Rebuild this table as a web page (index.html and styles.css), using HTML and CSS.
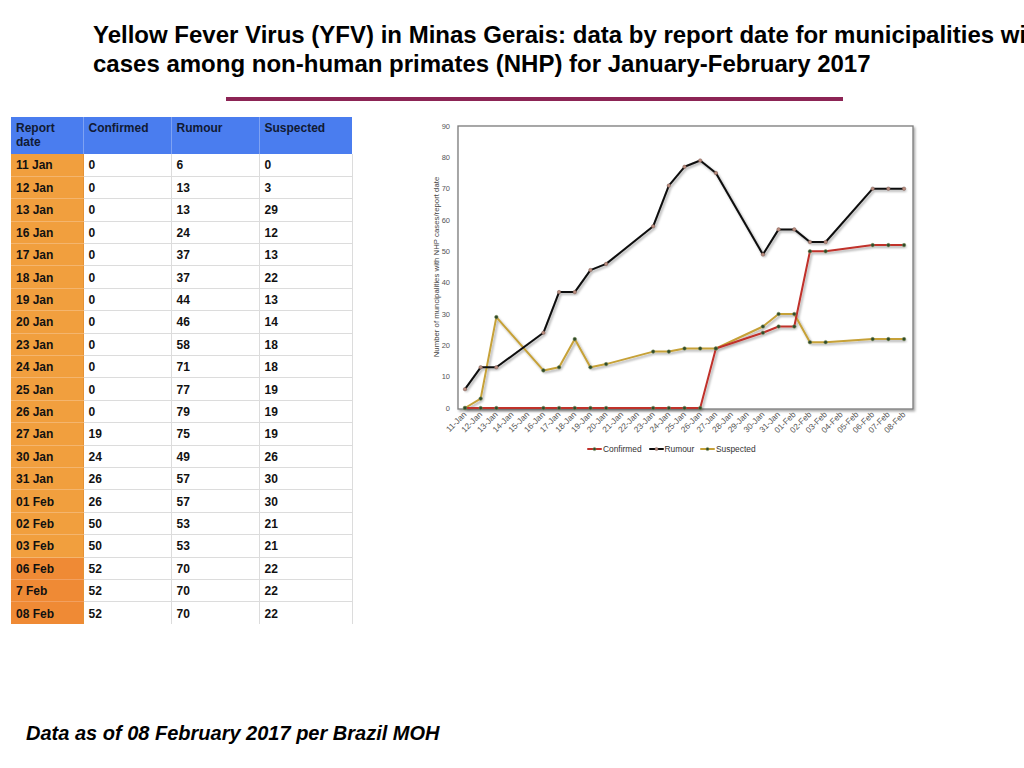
FILE: index.html
```html
<!DOCTYPE html>
<html>
<head>
<meta charset="utf-8">
<title>Yellow Fever Virus in Minas Gerais</title>
<link rel="stylesheet" href="styles.css">
</head>
<body>
<div class="slide">
  <h1 class="title">Yellow Fever Virus (YFV) in Minas Gerais: data by report date for municipalities with<br>cases among non-human primates (NHP) for January-February 2017</h1>
  <div class="rule"></div>
  <div class="content">
    <table class="data">
      <colgroup><col class="c1"><col class="c2"><col class="c3"><col class="c4"></colgroup>
      <thead>
        <tr><th>Report date</th><th>Confirmed</th><th>Rumour</th><th>Suspected</th></tr>
      </thead>
      <tbody>
        <tr><th>11 Jan</th><td>0</td><td>6</td><td>0</td></tr>
        <tr><th>12 Jan</th><td>0</td><td>13</td><td>3</td></tr>
        <tr><th>13 Jan</th><td>0</td><td>13</td><td>29</td></tr>
        <tr><th>16 Jan</th><td>0</td><td>24</td><td>12</td></tr>
        <tr><th>17 Jan</th><td>0</td><td>37</td><td>13</td></tr>
        <tr><th>18 Jan</th><td>0</td><td>37</td><td>22</td></tr>
        <tr><th>19 Jan</th><td>0</td><td>44</td><td>13</td></tr>
        <tr><th>20 Jan</th><td>0</td><td>46</td><td>14</td></tr>
        <tr><th>23 Jan</th><td>0</td><td>58</td><td>18</td></tr>
        <tr><th>24 Jan</th><td>0</td><td>71</td><td>18</td></tr>
        <tr><th>25 Jan</th><td>0</td><td>77</td><td>19</td></tr>
        <tr><th>26 Jan</th><td>0</td><td>79</td><td>19</td></tr>
        <tr><th>27 Jan</th><td>19</td><td>75</td><td>19</td></tr>
        <tr><th>30 Jan</th><td>24</td><td>49</td><td>26</td></tr>
        <tr><th>31 Jan</th><td>26</td><td>57</td><td>30</td></tr>
        <tr><th>01 Feb</th><td>26</td><td>57</td><td>30</td></tr>
        <tr><th>02 Feb</th><td>50</td><td>53</td><td>21</td></tr>
        <tr><th>03 Feb</th><td>50</td><td>53</td><td>21</td></tr>
        <tr class="late"><th>06 Feb</th><td>52</td><td>70</td><td>22</td></tr>
        <tr class="late"><th>7 Feb</th><td>52</td><td>70</td><td>22</td></tr>
        <tr class="late"><th>08 Feb</th><td>52</td><td>70</td><td>22</td></tr>
      </tbody>
    </table>

    <svg class="chart" width="500" height="350" viewBox="0 0 500 350">
      <defs>
        <filter id="sh" x="-10%" y="-10%" width="120%" height="130%">
          <feDropShadow dx="1.5" dy="1.8" stdDeviation="1" flood-color="#000" flood-opacity="0.35"/>
        </filter>
      </defs>
      <rect class="plot" x="37" y="11" width="455" height="283" filter="url(#sh)"/>
      <g class="ylab">
        <text x="29" y="13.7">90</text>
        <text x="29" y="45">80</text>
        <text x="29" y="76.3">70</text>
        <text x="29" y="107.7">60</text>
        <text x="29" y="139">50</text>
        <text x="29" y="170.3">40</text>
        <text x="29" y="201.7">30</text>
        <text x="29" y="233">20</text>
        <text x="29" y="264.3">10</text>
        <text x="29" y="295.7">0</text>
      </g>
      <text class="ytitle" transform="translate(17.5,152) rotate(-90)">Number of  muncipalities with NHP cases/report date</text>
      <g class="xlab">
        <text transform="translate(46,300) rotate(-45)">11-Jan</text>
        <text transform="translate(61.68,300) rotate(-45)">12-Jan</text>
        <text transform="translate(77.36,300) rotate(-45)">13-Jan</text>
        <text transform="translate(93.04,300) rotate(-45)">14-Jan</text>
        <text transform="translate(108.72,300) rotate(-45)">15-Jan</text>
        <text transform="translate(124.4,300) rotate(-45)">16-Jan</text>
        <text transform="translate(140.08,300) rotate(-45)">17-Jan</text>
        <text transform="translate(155.76,300) rotate(-45)">18-Jan</text>
        <text transform="translate(171.44,300) rotate(-45)">19-Jan</text>
        <text transform="translate(187.12,300) rotate(-45)">20-Jan</text>
        <text transform="translate(202.8,300) rotate(-45)">21-Jan</text>
        <text transform="translate(218.48,300) rotate(-45)">22-Jan</text>
        <text transform="translate(234.16,300) rotate(-45)">23-Jan</text>
        <text transform="translate(249.84,300) rotate(-45)">24-Jan</text>
        <text transform="translate(265.52,300) rotate(-45)">25-Jan</text>
        <text transform="translate(281.2,300) rotate(-45)">26-Jan</text>
        <text transform="translate(296.88,300) rotate(-45)">27-Jan</text>
        <text transform="translate(312.56,300) rotate(-45)">28-Jan</text>
        <text transform="translate(328.24,300) rotate(-45)">29-Jan</text>
        <text transform="translate(343.92,300) rotate(-45)">30-Jan</text>
        <text transform="translate(359.6,300) rotate(-45)">31-Jan</text>
        <text transform="translate(375.28,300) rotate(-45)">01-Feb</text>
        <text transform="translate(390.96,300) rotate(-45)">02-Feb</text>
        <text transform="translate(406.64,300) rotate(-45)">03-Feb</text>
        <text transform="translate(422.32,300) rotate(-45)">04-Feb</text>
        <text transform="translate(438,300) rotate(-45)">05-Feb</text>
        <text transform="translate(453.68,300) rotate(-45)">06-Feb</text>
        <text transform="translate(469.36,300) rotate(-45)">07-Feb</text>
        <text transform="translate(485.04,300) rotate(-45)">08-Feb</text>
      </g>

      <g filter="url(#sh)">
        <polyline class="s-sus" points="44,293 59.68,283.6 75.36,202.1 122.4,255.4 138.08,252.3 153.76,224.1 169.44,252.3 185.12,249.1 232.16,236.6 247.84,236.6 263.52,233.5 279.2,233.5 294.88,233.5 341.92,211.5 357.6,199 373.28,199 388.96,227.2 404.64,227.2 451.68,224.1 467.36,224.1 483.04,224.1"/>
        <polyline class="s-rum" points="44,274.2 59.68,252.3 75.36,252.3 122.4,217.8 138.08,177.1 153.76,177.1 169.44,155.1 185.12,148.9 232.16,111.3 247.84,70.6 263.52,51.8 279.2,45.5 294.88,58 341.92,139.5 357.6,114.4 373.28,114.4 388.96,127 404.64,127 451.68,73.7 467.36,73.7 483.04,73.7"/>
        <polyline class="s-con" points="44,293 59.68,293 75.36,293 122.4,293 138.08,293 153.76,293 169.44,293 185.12,293 232.16,293 247.84,293 263.52,293 279.2,293 294.88,233.5 341.92,217.8 357.6,211.5 373.28,211.5 388.96,136.3 404.64,136.3 451.68,130.1 467.36,130.1 483.04,130.1"/>
      </g>

      <g class="m-sus">
        <circle cx="44" cy="293" r="1.8"/><circle cx="59.68" cy="283.6" r="1.8"/><circle cx="75.36" cy="202.1" r="1.8"/><circle cx="122.4" cy="255.4" r="1.8"/><circle cx="138.08" cy="252.3" r="1.8"/><circle cx="153.76" cy="224.1" r="1.8"/><circle cx="169.44" cy="252.3" r="1.8"/><circle cx="185.12" cy="249.1" r="1.8"/><circle cx="232.16" cy="236.6" r="1.8"/><circle cx="247.84" cy="236.6" r="1.8"/><circle cx="263.52" cy="233.5" r="1.8"/><circle cx="279.2" cy="233.5" r="1.8"/><circle cx="294.88" cy="233.5" r="1.8"/><circle cx="341.92" cy="211.5" r="1.8"/><circle cx="357.6" cy="199" r="1.8"/><circle cx="373.28" cy="199" r="1.8"/><circle cx="388.96" cy="227.2" r="1.8"/><circle cx="404.64" cy="227.2" r="1.8"/><circle cx="451.68" cy="224.1" r="1.8"/><circle cx="467.36" cy="224.1" r="1.8"/><circle cx="483.04" cy="224.1" r="1.8"/>
      </g>
      <g class="m-rum">
        <circle cx="44" cy="274.2" r="1.8"/><circle cx="59.68" cy="252.3" r="1.8"/><circle cx="75.36" cy="252.3" r="1.8"/><circle cx="122.4" cy="217.8" r="1.8"/><circle cx="138.08" cy="177.1" r="1.8"/><circle cx="153.76" cy="177.1" r="1.8"/><circle cx="169.44" cy="155.1" r="1.8"/><circle cx="185.12" cy="148.9" r="1.8"/><circle cx="232.16" cy="111.3" r="1.8"/><circle cx="247.84" cy="70.6" r="1.8"/><circle cx="263.52" cy="51.8" r="1.8"/><circle cx="279.2" cy="45.5" r="1.8"/><circle cx="294.88" cy="58" r="1.8"/><circle cx="341.92" cy="139.5" r="1.8"/><circle cx="357.6" cy="114.4" r="1.8"/><circle cx="373.28" cy="114.4" r="1.8"/><circle cx="388.96" cy="127" r="1.8"/><circle cx="404.64" cy="127" r="1.8"/><circle cx="451.68" cy="73.7" r="1.8"/><circle cx="467.36" cy="73.7" r="1.8"/><circle cx="483.04" cy="73.7" r="1.8"/>
      </g>
      <g class="m-con">
        <circle cx="44" cy="293" r="1.8"/><circle cx="59.68" cy="293" r="1.8"/><circle cx="75.36" cy="293" r="1.8"/><circle cx="122.4" cy="293" r="1.8"/><circle cx="138.08" cy="293" r="1.8"/><circle cx="153.76" cy="293" r="1.8"/><circle cx="169.44" cy="293" r="1.8"/><circle cx="185.12" cy="293" r="1.8"/><circle cx="232.16" cy="293" r="1.8"/><circle cx="247.84" cy="293" r="1.8"/><circle cx="263.52" cy="293" r="1.8"/><circle cx="279.2" cy="293" r="1.8"/><circle cx="294.88" cy="233.5" r="1.8"/><circle cx="341.92" cy="217.8" r="1.8"/><circle cx="357.6" cy="211.5" r="1.8"/><circle cx="373.28" cy="211.5" r="1.8"/><circle cx="388.96" cy="136.3" r="1.8"/><circle cx="404.64" cy="136.3" r="1.8"/><circle cx="451.68" cy="130.1" r="1.8"/><circle cx="467.36" cy="130.1" r="1.8"/><circle cx="483.04" cy="130.1" r="1.8"/>
      </g>

      <g class="legend">
        <line class="s-con" x1="167" y1="334" x2="180" y2="334"/>
        <circle class="lm-dark" cx="173.5" cy="334" r="1.6"/>
        <text x="182" y="337">Confirmed</text>
        <line class="s-rum" x1="229" y1="334" x2="242" y2="334"/>
        <circle class="lm-rum" cx="235.5" cy="334" r="1.6"/>
        <text x="243.5" y="337">Rumour</text>
        <line class="s-sus" x1="280" y1="334" x2="293" y2="334"/>
        <circle class="lm-dark" cx="286.5" cy="334" r="1.6"/>
        <text x="295" y="337">Suspected</text>
      </g>
    </svg>
  </div>
  <p class="footer">Data as of 08 February 2017 per Brazil MOH</p>
</div>
</body>
</html>
```
FILE: styles.css
```css
html, body {
  margin: 0;
  padding: 0;
  background: #ffffff;
}

.slide {
  width: 1024px;
  height: 768px;
  overflow: hidden;
  display: flex;
  flex-direction: column;
  font-family: "Liberation Sans", Arial, sans-serif;
  color: #000;
}

.title {
  margin: 0;
  padding: 20px 0 0 93px;
  font-size: 24px;
  line-height: 29px;
  font-weight: bold;
  white-space: nowrap;
}

.rule {
  margin: 19px 0 0 226px;
  width: 617px;
  height: 4px;
  background: #8c2455;
}

.content {
  display: flex;
  align-items: flex-start;
  margin-top: 14px;
}

.data {
  margin: 2px 0 0 11px;
  border-collapse: collapse;
  table-layout: fixed;
  width: 341px;
  font-size: 12px;
  line-height: 14px;
  font-weight: bold;
  color: #111;
}

.c1 { width: 72px; }
.c2 { width: 88px; }
.c3 { width: 88px; }
.c4 { width: 93px; }

.data thead th {
  height: 37px;
  box-sizing: border-box;
  background: #4a7def;
  color: #111a33;
  text-align: left;
  vertical-align: top;
  padding: 4px 5px 0 5px;
  border-right: 1px solid #7ea2f3;
}

.data thead th:last-child {
  border-right: none;
}

.data tbody tr {
  height: 22.4px;
}

.data tbody th,
.data tbody td {
  text-align: left;
  vertical-align: middle;
  padding: 1px 5px 0 5px;
  font-weight: bold;
}

.data tbody th {
  background: #f19f3e;
  border-bottom: 1px solid #f4b56e;
  border-right: 1px solid #e59236;
}

.data tbody tr.late th {
  background: #ef8a35;
  border-bottom-color: #f2a060;
}

.data tbody td {
  background: #fff;
  border-right: 1px solid #dcdcdc;
  border-bottom: 1px solid #dcdcdc;
}

.data tbody tr:last-child th,
.data tbody tr:last-child td {
  border-bottom: none;
}

.chart {
  display: block;
  margin-left: 68px;
  font-family: "Liberation Sans", Arial, sans-serif;
}

.plot {
  fill: #ffffff;
  stroke: #7a7a7a;
  stroke-width: 1.3;
}

.ylab text {
  font-size: 7.5px;
  fill: #555;
  text-anchor: end;
}

.ytitle {
  font-size: 7.8px;
  fill: #444;
  text-anchor: middle;
}

.xlab text {
  font-size: 8.3px;
  fill: #555;
  text-anchor: end;
}

.s-sus, .s-rum, .s-con {
  fill: none;
  stroke-width: 2;
  stroke-linejoin: round;
  stroke-linecap: round;
}

.s-sus { stroke: #c6a137; }
.s-rum { stroke: #0a0a0a; }
.s-con { stroke: #c0302b; }

.m-sus circle, .m-con circle, .lm-dark {
  fill: #2f4a2a;
  stroke: #7d8f5a;
  stroke-width: 0.5;
}

.m-rum circle, .lm-rum {
  fill: #b98c7e;
  stroke: #6d4d44;
  stroke-width: 0.4;
}

.legend text {
  font-size: 8.4px;
  fill: #333;
}

.footer {
  margin: auto 0 23px 26px;
  font-size: 20px;
  line-height: 24px;
  font-weight: bold;
  font-style: italic;
}
```
